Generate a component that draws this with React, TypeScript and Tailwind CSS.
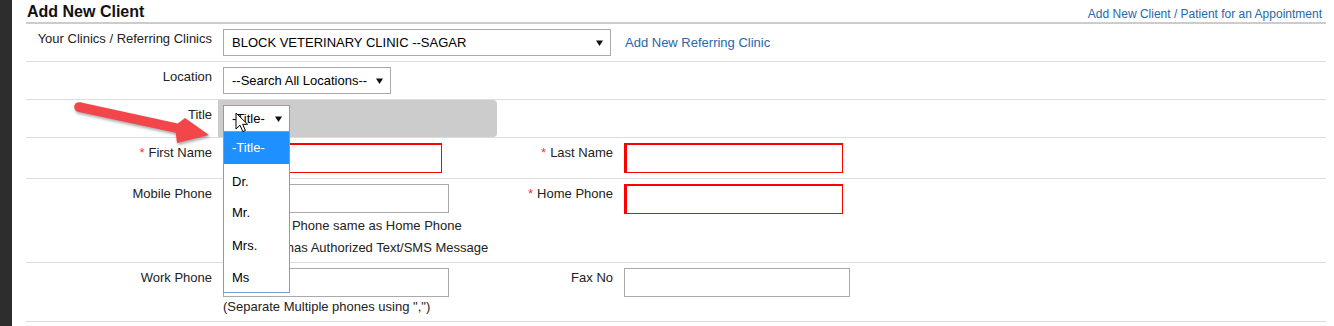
import React from "react";

const Caret = () => (
  <svg width="7" height="6" viewBox="0 0 7 6" className="shrink-0">
    <path d="M0 0.5 H7 L3.5 6 Z" fill="#111" />
  </svg>
);

const Label = ({ children, req }: { children: React.ReactNode; req?: boolean }) => (
  <div className="pt-[7px] pr-[6px] text-right leading-[15px] text-[13px] text-[#222] whitespace-nowrap">
    {req && <span className="text-[#f33] mr-[4px]">*</span>}
    {children}
  </div>
);

const FakeSelect = ({ text, w, blue }: { text: string; w: string; blue?: boolean }) => (
  <div
    className={`${w} h-[27px] flex items-center justify-between pl-[8px] pr-[7px] bg-white border text-[13px] text-black whitespace-nowrap ${
      blue ? "border-[#7b9bd1]" : "border-[#a9a9a9]"
    }`}
  >
    <span>{text}</span>
    <Caret />
  </div>
);

const RedInput = () => (
  <div className="w-[219px] h-[30px] bg-white border-[#ff0000] border-t-2 border-l-[3px] border-r border-b" />
);

const GrayInput = () => <div className="w-[226px] h-[29px] bg-white border border-[#a9a9a9]" />;

const rowCls = "grid grid-cols-[192px_279px_122px_1fr] border-b border-[#ddd]";

export default function App() {
  return (
    <div className="relative w-[1334px] h-[326px] overflow-hidden bg-white flex font-['Liberation_Sans',_Arial,_sans-serif]">
      <div className="w-[12px] h-full bg-[#2d2d2d] shrink-0" />
      <div className="flex-1 pl-[14px] pr-[8px]">
        {/* header */}
        <div className="h-[24px] flex items-end justify-between border-b-2 border-[#ccc]">
          <div className="pl-[1px] text-[16px] font-bold leading-[20px] text-[#111]">Add New Client</div>
          <div className="pr-[4px] text-[12px] leading-[16px] text-[#2867a8]">
            Add New Client / Patient for an Appointment
          </div>
        </div>

        {/* Row 1 */}
        <div className={rowCls}>
          <Label>Your Clinics / Referring Clinics</Label>
          <div className="col-span-3 flex items-center py-[5px] pl-[5px]">
            <FakeSelect text="BLOCK VETERINARY CLINIC --SAGAR" w="w-[388px]" />
            <span className="ml-[14px] text-[13px] text-[#2867a8]">Add New Referring Clinic</span>
          </div>
        </div>

        {/* Row 2 */}
        <div className={rowCls}>
          <Label>Location</Label>
          <div className="col-span-3 flex items-center py-[5px] pl-[5px]">
            <FakeSelect text="--Search All Locations--" w="w-[168px]" />
          </div>
        </div>

        {/* Row 3 Title */}
        <div className={rowCls}>
          <Label>Title</Label>
          <div className="bg-[#ccc] rounded-r-[4px] py-[5px] pl-[5px]">
            <div className="relative w-[67px]">
              <FakeSelect text="-Title-" w="w-[67px]" blue />
              <div className="absolute left-0 top-[26px] w-[67px] z-10 bg-white border border-[#7b9bd1] text-[13px]">
                <div className="h-[32px] flex items-center pl-[8px] bg-[#1e90ff] text-white">-Title-</div>
                <div className="h-[32px] flex items-center pl-[8px] text-black pt-[4px]">Dr.</div>
                <div className="h-[32px] flex items-center pl-[8px] text-black pt-[2px]">Mr.</div>
                <div className="h-[32px] flex items-center pl-[8px] text-black pt-[4px]">Mrs.</div>
                <div className="h-[32px] flex items-center pl-[8px] text-black pt-[4px]">Ms</div>
              </div>
              <svg
                className="absolute left-[12px] top-[7px] z-20"
                width="14"
                height="21"
                viewBox="0 0 14 21"
              >
                <path
                  d="M1 1 L1 17 L5 13.2 L7.8 19.6 L10.4 18.5 L7.7 12.3 L12.6 12.3 Z"
                  fill="#fff"
                  stroke="#000"
                  strokeWidth="1"
                  strokeLinejoin="round"
                />
              </svg>
            </div>
          </div>
          <div />
          <div />
        </div>

        {/* Row 4 */}
        <div className={rowCls}>
          <Label req>First Name</Label>
          <div className="py-[5px] pl-[5px]">
            <RedInput />
          </div>
          <Label req>Last Name</Label>
          <div className="py-[5px] pl-[5px]">
            <RedInput />
          </div>
        </div>

        {/* Row 5 */}
        <div className={rowCls}>
          <Label>Mobile Phone</Label>
          <div className="pt-[5px] pb-[3px] pl-[5px] text-[13px] text-[#222]">
            <GrayInput />
            <div className="mt-[2px] h-[22px] flex items-center whitespace-nowrap">
              <span className="ml-[3px] w-[13px] h-[13px] border border-[#767676] rounded-[2px] bg-white" />
              <span className="ml-[11px]">Mobile Phone same as Home Phone</span>
            </div>
            <div className="h-[22px] flex items-center whitespace-nowrap">
              <span className="ml-[3px] w-[13px] h-[13px] border border-[#767676] rounded-[2px] bg-white" />
              <span className="ml-[11px]">Client has Authorized Text/SMS Message</span>
            </div>
          </div>
          <Label req>Home Phone</Label>
          <div className="py-[5px] pl-[5px]">
            <RedInput />
          </div>
        </div>

        {/* Row 6 */}
        <div className={rowCls}>
          <Label>Work Phone</Label>
          <div className="pt-[5px] pb-[4px] pl-[5px] text-[13px] text-[#222]">
            <GrayInput />
            <div className="h-[20px] flex items-center whitespace-nowrap">(Separate Multiple phones using ",")</div>
          </div>
          <Label>Fax No</Label>
          <div className="py-[5px] pl-[5px]">
            <GrayInput />
          </div>
        </div>
      </div>

      {/* red annotation arrow */}
      <svg
        className="absolute left-[70px] top-[95px] z-30 pointer-events-none"
        width="150"
        height="60"
        viewBox="0 0 150 60"
        style={{ filter: "drop-shadow(1px 2px 1.5px rgba(0,0,0,0.35))" }}
      >
        <circle cx="9" cy="12" r="4.8" fill="#f2464a" />
        <polygon
          points="10,7.3 107.7,28.4 115,23 139,40 107,48 105.7,37.7 8,16.7"
          fill="#f2464a"
        />
      </svg>
    </div>
  );
}
